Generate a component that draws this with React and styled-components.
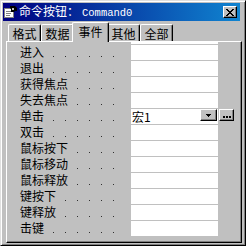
import styled, { createGlobalStyle } from "styled-components";

const GlobalStyle = createGlobalStyle`
  html, body {
    margin: 0;
    padding: 0;
    background: #fff;
  }
  body {
    font-family: "Noto Sans CJK SC", "Noto Sans", sans-serif;
    font-size: 12px;
  }
`;

const tabs = ["格式", "数据", "事件", "其他", "全部"];
const events = [
  "进入", "退出", "获得焦点", "失去焦点", "单击", "双击",
  "鼠标按下", "鼠标移动", "鼠标释放", "键按下", "键释放", "击键",
];

export default function App() {
  return (
    <>
      <GlobalStyle />
      <Window>
        <TitleBar>
          <FormIcon />
          <Title>
            命令按钮：<Mono>Command0</Mono>
          </Title>
          <CloseButton>
            <svg width="8" height="7" viewBox="0 0 8 7">
              <path d="M0 0h2v1H0zM6 0h2v1H6zM1 1h2v1H1zM5 1h2v1H5zM2 2h4v1H2zM3 3h2v1H3zM2 4h4v1H2zM1 5h2v1H1zM5 5h2v1H5zM0 6h2v1H0zM6 6h2v1H6z" fill="#000" />
            </svg>
          </CloseButton>
        </TitleBar>

        <TabStrip>
          {tabs.map((t) => (
            <Tab key={t} $active={t === "事件"}>{t}</Tab>
          ))}
        </TabStrip>

        <Panel>
          {events.map((e, i) => (
            <Row key={e}>
              <LabelCell>
                <Label>{e}</Label>
              </LabelCell>
              <ValueCell $first={i === 0}>
                {e === "单击" && (
                  <>
                    <ValueText>宏1</ValueText>
                    <DropButton>
                      <svg width="5" height="3" viewBox="0 0 5 3">
                        <path d="M0 0h5v1H0zM1 1h3v1H1zM2 2h1v1H2z" fill="#000" />
                      </svg>
                    </DropButton>
                  </>
                )}
              </ValueCell>
              <ExtraCell>
                {e === "单击" && (
                  <BuildButton>
                    <svg width="8" height="2" viewBox="0 0 8 2">
                      <path d="M0 0h2v2H0zM3 0h2v2H3zM6 0h2v2H6z" fill="#000" />
                    </svg>
                  </BuildButton>
                )}
              </ExtraCell>
            </Row>
          ))}
        </Panel>
      </Window>
    </>
  );
}

function FormIcon() {
  return (
    <IconBox>
      <svg width="13" height="12" viewBox="0 0 13 12">
        <rect x="0.5" y="2.5" width="9" height="9" fill="#fff" stroke="#808080" />
        <path d="M2 5h5v1H2zM2 7h5v1H2zM2 9h4v1H2z" fill="#808080" />
        <path d="M6 0h5l2 2v3h-2l-1 1H7V3l-1-1z" fill="#000" />
        <path d="M8 2h2v2H8z" fill="#c0c0c0" />
      </svg>
    </IconBox>
  );
}

const Window = styled.div`
  box-sizing: border-box;
  width: 246px;
  height: 246px;
  background: #c0c0c0;
  border: 1px solid;
  border-color: #dfdfdf #000 #000 #dfdfdf;
  box-shadow: inset 1px 1px 0 #fff, inset -1px -1px 0 #808080;
  padding: 2px;
  display: flex;
  flex-direction: column;
`;

const TitleBar = styled.div`
  height: 18px;
  margin-right: 3px;
  padding-left: 1px;
  display: flex;
  align-items: center;
  background: linear-gradient(90deg, #000080, #1084d0);
  color: #fff;
`;

const IconBox = styled.div`
  display: flex;
  width: 13px;
  height: 12px;
`;

const Title = styled.div`
  margin-left: 2px;
  font-family: "Noto Sans CJK SC", sans-serif;
  font-size: 12px;
  line-height: 18px;
  white-space: nowrap;
`;

const Mono = styled.span`
  font-family: "Liberation Mono", monospace;
  font-size: 10.5px;
  margin-left: 3px;
`;

const RaisedButton = styled.div`
  box-sizing: border-box;
  display: flex;
  align-items: center;
  justify-content: center;
  background: #c0c0c0;
  border: 1px solid;
  border-color: #fff #000 #000 #fff;
  box-shadow: inset -1px -1px 0 #808080;
`;

const CloseButton = styled(RaisedButton)`
  width: 14px;
  height: 12px;
  margin-left: auto;
  margin-right: 3px;
`;

const TabStrip = styled.div`
  height: 20px;
  padding-left: 5px;
  display: flex;
  align-items: flex-end;
  position: relative;
  z-index: 1;
`;

const Tab = styled.div`
  box-sizing: border-box;
  position: relative;
  z-index: ${(p) => (p.$active ? 1 : 0)};
  display: flex;
  align-items: center;
  justify-content: center;
  width: ${(p) => (p.$active ? 37 : 33)}px;
  height: ${(p) => (p.$active ? 20 : 17)}px;
  margin: 0 ${(p) => (p.$active ? -2 : 0)}px ${(p) => (p.$active ? -1 : 0)}px;
  padding-bottom: ${(p) => (p.$active ? 2 : 0)}px;
  background: #c0c0c0;
  border-top: 1px solid #fff;
  border-left: 1px solid #fff;
  border-right: 1px solid #000;
  box-shadow: inset -1px 0 0 #808080;
  border-radius: 2px 2px 0 0;
  color: #000;
  font-size: 12px;
  white-space: nowrap;
`;

const Panel = styled.div`
  flex: 1;
  margin: 0 1px 0 3px;
  border: 1px solid;
  border-color: #fff #000 #000 #fff;
  box-shadow: inset -1px -1px 0 #808080;
  padding: 2px 1px 0 0;
`;

const Row = styled.div`
  display: grid;
  grid-template-columns: 124px 87px 1fr;
  height: 16px;
`;

const LabelCell = styled.div`
  display: flex;
  align-items: center;
  padding: 0 16px 0 13px;
  background-image: linear-gradient(90deg, #303030 1px, transparent 1px);
  background-size: 12px 1px;
  background-repeat: repeat-x;
  background-origin: content-box;
  background-clip: content-box;
  background-position: 9px 12px;
`;

const Label = styled.span`
  background: #c0c0c0;
  padding-right: 6px;
  color: #000;
  font-size: 12px;
  line-height: 16px;
  white-space: nowrap;
`;

const ValueCell = styled.div`
  display: flex;
  align-items: flex-start;
  background: #fff;
  border-top: 1px solid #c0c0c0;
  box-shadow: ${(p) => (p.$first ? "0 -2px 0 #fff" : "none")};
`;

const ValueText = styled.span`
  flex: 1;
  padding-left: 1px;
  color: #000;
  font-size: 12px;
  line-height: 15px;
`;

const DropButton = styled(RaisedButton)`
  width: 17px;
  height: 12px;
  margin-right: 1px;
`;

const ExtraCell = styled.div`
  display: flex;
  align-items: flex-start;
`;

const BuildButton = styled(RaisedButton)`
  width: 15px;
  height: 12px;
  margin: 1px 0 0 1px;
  align-items: flex-end;
  padding-bottom: 2px;
`;
